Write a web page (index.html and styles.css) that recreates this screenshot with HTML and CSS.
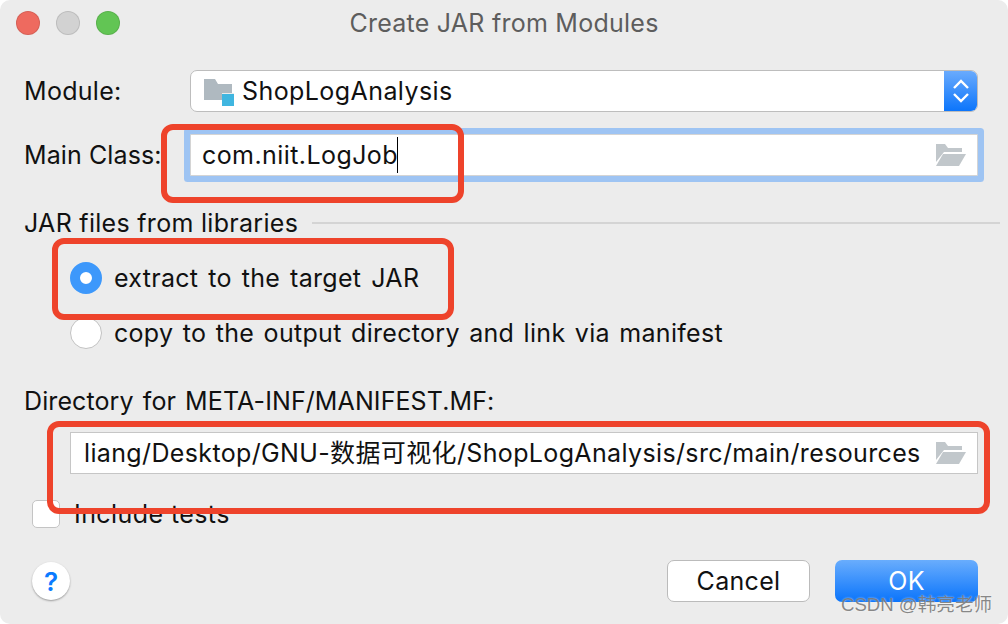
FILE: index.html
```html
<!DOCTYPE html>
<html lang="en">
<head>
<meta charset="utf-8">
<title>Create JAR from Modules</title>
<link rel="stylesheet" href="styles.css">
</head>
<body>
<div class="dialog">
  <header class="titlebar">
    <div class="lights">
      <span class="light red"></span>
      <span class="light grey"></span>
      <span class="light green"></span>
    </div>
    <h1 class="title">Create JAR from Modules</h1>
  </header>

  <div class="row module-row">
    <span class="label">Module:</span>
    <div class="select">
      <svg class="module-icon" width="30" height="28" viewBox="0 0 30 28">
        <path d="M0 0H11L14 5H28V21H0Z" fill="#afb9c0"/>
        <rect x="18" y="14" width="12" height="12" fill="#ececec"/>
        <rect x="18" y="15" width="12" height="12" fill="#40b6e0"/>
      </svg>
      <span class="value">ShopLogAnalysis</span>
      <span class="stepper">
        <svg width="18" height="26" viewBox="0 0 18 26">
          <path d="M2 10L9 3L16 10M2 16L9 23L16 16" fill="none" stroke="#fff" stroke-width="2.4"/>
        </svg>
      </span>
    </div>
  </div>

  <div class="row class-row">
    <span class="label main-class">Main Class:</span>
    <div class="input focused">
      <span class="value">com.niit.LogJob</span><span class="caret"></span>
      <svg class="folder" width="30" height="22" viewBox="0 0 30 22">
        <path d="M0 0H9L12 4H26V8H8L0 18Z" fill="#c1c7cb"/>
        <path d="M7 10H30L23 22H0Z" fill="#c1c7cb"/>
      </svg>
    </div>
  </div>

  <div class="section">
    <span class="label">JAR files from libraries</span>
    <span class="rule"></span>
  </div>

  <div class="option first">
    <span class="radio on"></span>
    <span class="label">extract to the target JAR</span>
  </div>
  <div class="option second">
    <span class="radio"></span>
    <span class="label">copy to the output directory and link via manifest</span>
  </div>

  <div class="dir-label label">Directory for META-INF/MANIFEST.MF:</div>
  <div class="input dir">
    <span class="value">liang/Desktop/GNU-数据可视化/ShopLogAnalysis/src/main/resources</span>
    <svg class="folder" width="30" height="22" viewBox="0 0 30 22">
      <path d="M0 0H9L12 4H26V8H8L0 18Z" fill="#c1c7cb"/>
      <path d="M7 10H30L23 22H0Z" fill="#c1c7cb"/>
    </svg>
  </div>

  <div class="check-row">
    <span class="checkbox"></span>
    <span class="label">Include tests</span>
  </div>

  <footer class="footer">
    <span class="help">?</span>
    <div class="buttons">
      <span class="btn">Cancel</span>
      <span class="btn primary">OK</span>
    </div>
  </footer>

  <div class="mark mark-class"></div>
  <div class="mark mark-extract"></div>
  <div class="mark mark-dir"></div>
  <div class="watermark">CSDN @韩亮老师</div>
</div>
</body>
</html>
```
FILE: styles.css
```css
* { box-sizing: border-box; }
html, body { margin: 0; padding: 0; }
body {
  width: 1008px;
  height: 624px;
  overflow: hidden;
  background: #fff;
  font-family: Inter, "Noto Sans CJK SC", sans-serif;
  color: #111;
}
.dialog {
  position: relative;
  width: 1008px;
  height: 624px;
  background: #ececec;
  border-radius: 10px;
  overflow: hidden;
  display: flex;
  flex-direction: column;
  font-size: 25px;
  letter-spacing: 0.3px;
}
.titlebar {
  height: 46px;
  flex: none;
  display: flex;
  align-items: center;
  position: relative;
  padding-left: 16px;
}
.lights { display: flex; gap: 16px; }
.light {
  width: 24px;
  height: 24px;
  border-radius: 50%;
  border: 1px solid rgba(0,0,0,.1);
}
.red { background: #ee6a5f; }
.grey { background: #d2d2d2; }
.green { background: #62c554; }
.title {
  position: absolute;
  left: 0;
  right: 0;
  top: 7px;
  margin: 0;
  text-align: center;
  font-size: 25px;
  line-height: 32px;
  font-weight: 400;
  letter-spacing: 0.25px;
  color: #5d5d5d;
}
.label { line-height: 32px; white-space: nowrap; }
.row {
  display: flex;
  align-items: center;
  height: 42px;
  padding: 0 30px 0 24px;
}
.row .label { width: 166px; flex: none; }
.row .main-class { letter-spacing: 0.1px; }
.module-row { margin-top: 24px; }
.class-row { margin-top: 22px; }
.value { letter-spacing: 0.42px; }
.select {
  flex: 1;
  height: 42px;
  position: relative;
  display: flex;
  align-items: center;
  background: #fff;
  border: 1px solid #bdbdbd;
  border-radius: 7px;
  padding-left: 13px;
  overflow: hidden;
}
.module-icon { flex: none; margin: 4px 8px 0 0; }
.stepper {
  position: absolute;
  top: -1px;
  right: -1px;
  bottom: -1px;
  width: 34px;
  display: flex;
  align-items: center;
  justify-content: center;
  background: linear-gradient(#6cacfd, #0a74fb);
}
.input {
  height: 42px;
  display: flex;
  align-items: center;
  background: #fff;
  border: 1px solid #c6c6c6;
  padding-left: 13px;
  white-space: nowrap;
}
.input .folder { margin-left: auto; margin-right: 11px; flex: none; }
.focused {
  flex: 1;
  border-radius: 1px;
  box-shadow: 0 0 0 6px #9ec4f3;
  border-color: #d4d4d4;
  padding-left: 11px;
}
.caret {
  display: inline-block;
  width: 1.5px;
  height: 36px;
  background: #000;
  margin-left: -1px;
}
.section {
  display: flex;
  align-items: center;
  gap: 14px;
  margin-top: 31px;
  padding: 0 8px 0 24px;
}
.rule { flex: 1; height: 2px; background: #d4d4d4; }
.option {
  display: flex;
  align-items: center;
  gap: 12px;
  padding-left: 70px;
  height: 32px;
}
.first { margin-top: 23px; word-spacing: 2.6px; }
.second { margin-top: 23px; word-spacing: 2.1px; }
.radio {
  width: 32px;
  height: 32px;
  border-radius: 50%;
  background: #fff;
  border: 1px solid #c2c2c2;
  flex: none;
}
.radio.on {
  border: 10px solid #3d98fb;
  background: #fff;
}
.dir-label { margin: 36px 0 0 24px; letter-spacing: 0.1px; word-spacing: 2px; }
.dir {
  margin: 15px 30px 0 70px;
}
.dir .value { padding-bottom: 4px; letter-spacing: 0.36px; }
.check-row {
  display: flex;
  align-items: center;
  gap: 14px;
  padding-left: 32px;
  margin-top: 26px;
  height: 28px;
  letter-spacing: 0.42px;
}
.checkbox {
  width: 28px;
  height: 28px;
  flex: none;
  background: #fff;
  border: 1px solid #c4c4c4;
  border-radius: 5px;
}
.footer {
  display: flex;
  align-items: center;
  justify-content: space-between;
  margin-top: 32px;
  padding: 0 30px 0 32px;
}
.help {
  width: 38px;
  height: 38px;
  border-radius: 50%;
  background: #fff;
  box-shadow: 0 1px 2px rgba(0,0,0,.35);
  color: #0a7bff;
  font-weight: 600;
  font-size: 26px;
  letter-spacing: 0;
  display: flex;
  align-items: center;
  justify-content: center;
}
.buttons { display: flex; gap: 25px; }
.btn {
  width: 143px;
  height: 42px;
  display: flex;
  align-items: center;
  justify-content: center;
  background: #fff;
  border: 1px solid #bbb;
  border-radius: 7px;
}
.btn.primary {
  border: 0;
  color: #fff;
  background: linear-gradient(#69adfd, #0a74fb);
}
.mark {
  position: absolute;
  border: 6px solid #ee432b;
  border-radius: 12px;
}
.mark-class { left: 161px; top: 124px; width: 303px; height: 79px; }
.mark-extract { left: 52px; top: 238px; width: 402px; height: 82px; }
.mark-dir { left: 47px; top: 421px; width: 943px; height: 93px; }
.watermark {
  position: absolute;
  left: 841px;
  top: 592px;
  font-family: "Liberation Sans", "Noto Sans CJK SC", sans-serif;
  font-size: 18.6px;
  line-height: 26px;
  letter-spacing: 0;
  color: rgba(115,115,115,.85);
  text-shadow: 0 0 2px rgba(255,255,255,.7);
  white-space: nowrap;
}
```
